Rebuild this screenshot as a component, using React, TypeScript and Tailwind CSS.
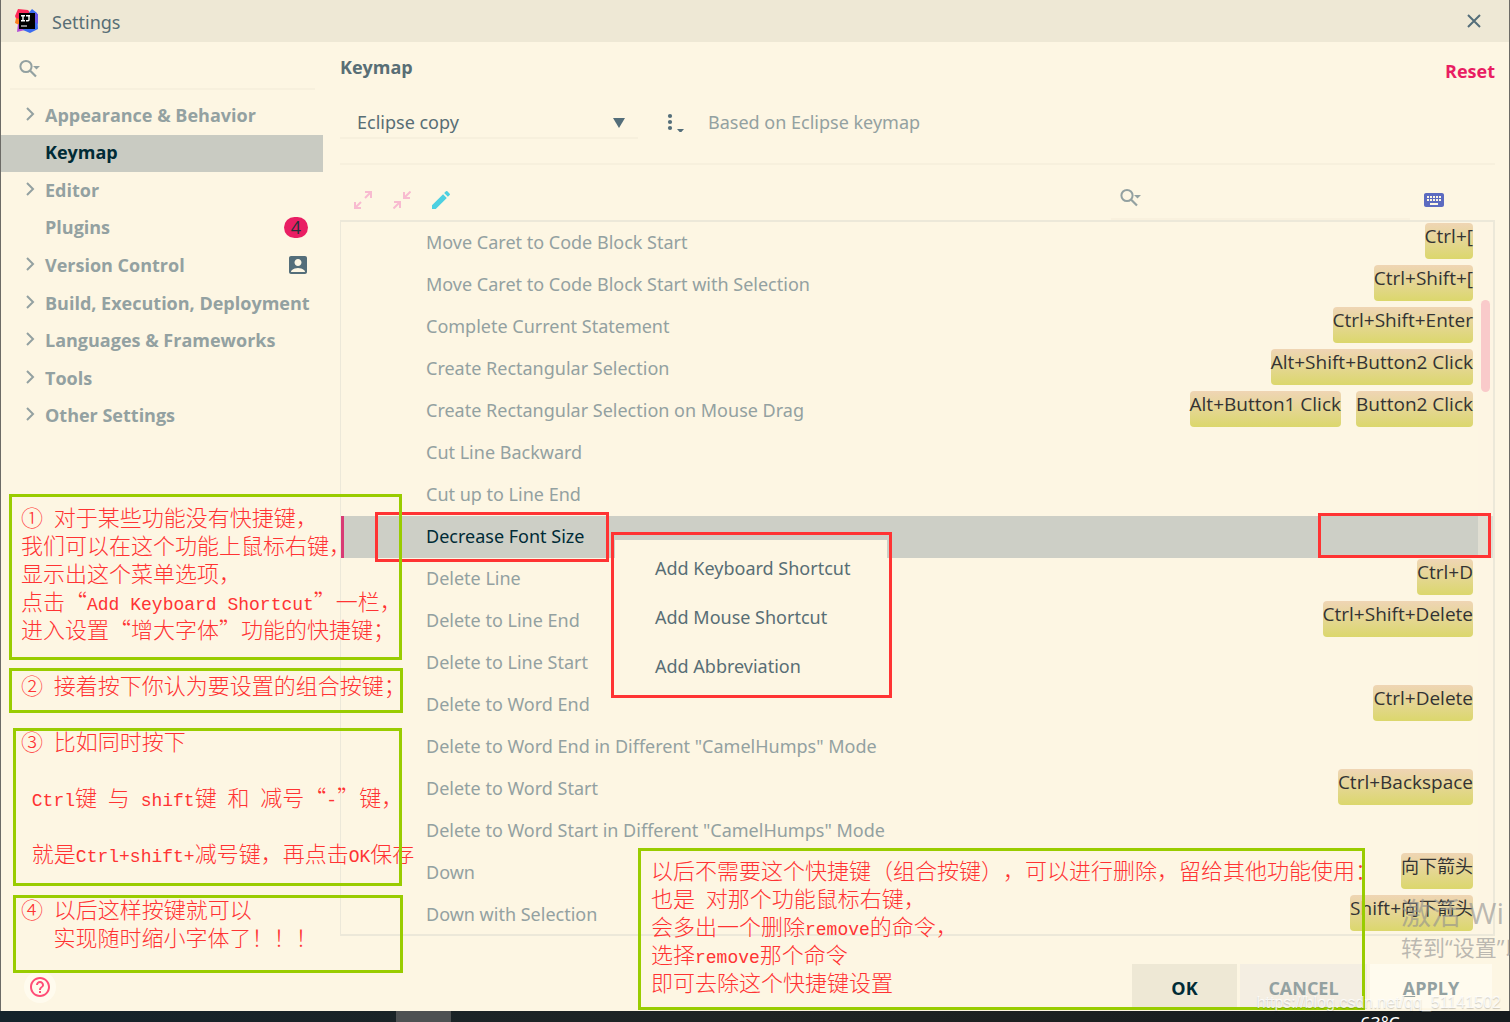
import React, { useState } from 'react';
import { MdAccountBox, MdEdit, MdHelpOutline, MdKeyboard } from 'react-icons/md';

interface Category {
  label: string;
  expandable: boolean;
  badge?: string;
  project?: boolean;
}

interface Action {
  name: string;
  shortcuts: string[];
}

const categories: Category[] = [
  { label: 'Appearance & Behavior', expandable: true },
  { label: 'Keymap', expandable: false },
  { label: 'Editor', expandable: true },
  { label: 'Plugins', expandable: false, badge: '4' },
  { label: 'Version Control', expandable: true, project: true },
  { label: 'Build, Execution, Deployment', expandable: true },
  { label: 'Languages & Frameworks', expandable: true },
  { label: 'Tools', expandable: true },
  { label: 'Other Settings', expandable: true },
];

const actions: Action[] = [
  { name: 'Move Caret to Code Block Start', shortcuts: ['Ctrl+['] },
  { name: 'Move Caret to Code Block Start with Selection', shortcuts: ['Ctrl+Shift+['] },
  { name: 'Complete Current Statement', shortcuts: ['Ctrl+Shift+Enter'] },
  { name: 'Create Rectangular Selection', shortcuts: ['Alt+Shift+Button2 Click'] },
  { name: 'Create Rectangular Selection on Mouse Drag', shortcuts: ['Alt+Button1 Click', 'Button2 Click'] },
  { name: 'Cut Line Backward', shortcuts: [] },
  { name: 'Cut up to Line End', shortcuts: [] },
  { name: 'Decrease Font Size', shortcuts: [] },
  { name: 'Delete Line', shortcuts: ['Ctrl+D'] },
  { name: 'Delete to Line End', shortcuts: ['Ctrl+Shift+Delete'] },
  { name: 'Delete to Line Start', shortcuts: [] },
  { name: 'Delete to Word End', shortcuts: ['Ctrl+Delete'] },
  { name: 'Delete to Word End in Different "CamelHumps" Mode', shortcuts: [] },
  { name: 'Delete to Word Start', shortcuts: ['Ctrl+Backspace'] },
  { name: 'Delete to Word Start in Different "CamelHumps" Mode', shortcuts: [] },
  { name: 'Down', shortcuts: ['向下箭头'] },
  { name: 'Down with Selection', shortcuts: ['Shift+向下箭头'] },
];

const menuItems = ['Add Keyboard Shortcut', 'Add Mouse Shortcut', 'Add Abbreviation'];

const Logo = () => (
  <svg className="w-6 h-6" viewBox="0 0 24 24" aria-hidden="true">
    <path d="M3 0 L13 1 L16 5 L11 15 L2 12 L0 7 Z" fill="#fe2857" />
    <path d="M1 9 L7 11 L6 17 L0 14 Z" fill="#fc801d" />
    <path d="M3 15 L12 16 L10 21 L2 23 Z" fill="#b24fd6" />
    <path d="M17 0 L22 4 L23 20 L15 24 L8 21 L12 6 Z" fill="#3b6cf0" />
    <path d="M20 4 L23 5 L23 15 L18 12 Z" fill="#6b57e8" />
    <rect x="4" y="4" width="16" height="16" fill="#000" />
    <path d="M6 6.700h4M8 6.700v5M6 11.700h4M11 6.700h4M14 6.700v4q0 1-1 1h-2" stroke="#fff" strokeWidth="1.400" fill="none" />
    <path d="M6 17h6" stroke="#ddd" strokeWidth="1.200" />
  </svg>
);

const SearchIcon = () => (
  <svg className="w-[22px] h-5 shrink-0" viewBox="0 0 22 20" aria-hidden="true">
    <circle cx="7" cy="7.500" r="5.600" fill="none" stroke="#93a1a1" strokeWidth="2" />
    <path d="M11 11.500 L17 17.500" stroke="#93a1a1" strokeWidth="2.200" />
    <path d="M14 7 h7 l-3.500 3.500 Z" fill="#93a1a1" />
  </svg>
);

const Chevron = () => (
  <svg className="w-[10px] h-[14px] mb-[2px]" viewBox="0 0 10 14" aria-hidden="true">
    <path d="M2 1 L8 7 L2 13" fill="none" stroke="#93a1a1" strokeWidth="2" />
  </svg>
);

const ExpandIcon = () => (
  <svg className="w-[18px] h-[18px]" viewBox="0 0 18 18" fill="none" stroke="#f8bbd0" strokeWidth="2" aria-hidden="true">
    <path d="M11 1h6v6M17 1l-6 6M7 17H1v-6M1 17l6-6" />
  </svg>
);

const CollapseIcon = () => (
  <svg className="w-[18px] h-[18px]" viewBox="0 0 18 18" fill="none" stroke="#f8bbd0" strokeWidth="2" aria-hidden="true">
    <path d="M17.500 .5l-6 6M11 1v6h6M.5 17.500l6-6M1 11h6v6" />
  </svg>
);

// Latin runs are set in a monospaced face that is half as wide as a Han character
const NoteLine: React.FC<{ text: string }> = ({ text }) => (
  <p className="h-7">
    {text.split(/([\x20-\x7e]+)/).map((part, i) =>
      i % 2 ? (
        <span key={i} className="font-['Liberation_Mono',monospace] text-lg/6">{part}</span>
      ) : (
        part
      )
    )}
  </p>
);

const Note: React.FC<{ className: string; lines: string[] }> = ({ className, lines }) => (
  <div
    lang="zh-CN"
    className={`absolute whitespace-pre font-light font-['Noto_Sans_CJK_SC',sans-serif] [text-spacing-trim:space-all] text-[22px]/6 text-[#ff3333] outline-3 -outline-offset-3 outline-[#99cc00] ${className}`}
  >
    {lines.map((line, i) => (
      <NoteLine key={i} text={line} />
    ))}
  </div>
);

const Sidebar = () => (
  <aside className="w-[322px] shrink-0 flex flex-col">
    <label className="flex items-center h-12 ml-[9px] mr-2 pt-2 pl-[9px] border-b-2 border-[#f7f0dd]">
      <SearchIcon />
      <input type="text" aria-label="Search settings" className="w-full bg-transparent outline-none" />
    </label>
    <nav className="mt-[7px] h-[338px] grid grid-cols-1 auto-rows-fr">
      {categories.map((item) => (
        <button
          key={item.label}
          className={`flex items-center pl-6 pr-[15px] pb-[2px] font-bold text-left font-['Open_Sans',sans-serif] ${
            item.label === 'Keymap' ? 'bg-[#c9cbc2] text-[#002b36]' : 'text-[#93a1a1]'
          }`}
        >
          <span className="w-5 shrink-0">{item.expandable && <Chevron />}</span>
          <span className="flex-1 min-w-0 whitespace-nowrap">{item.label}</span>
          {item.badge && (
            <span className="w-6 h-[21px] rounded-full bg-[#e91e63] text-[#263238] font-normal leading-5 text-center">
              {item.badge}
            </span>
          )}
          {item.project && <MdAccountBox className="w-6 h-6 -mr-[2px] text-[#546e7a]" />}
        </button>
      ))}
    </nav>
    <button aria-label="Help" className="mt-auto mb-2 ml-[23px] w-8 h-8 rounded-full bg-[#fffbee] flex items-center justify-center">
      <MdHelpOutline className="w-6 h-6 text-[#ff4d77]" />
    </button>
  </aside>
);

const ActionList: React.FC<{ selected: string; onSelect: (name: string) => void }> = ({ selected, onSelect }) => (
  <div className="relative h-[716px] border-2 border-l border-[#ece8d9] overflow-hidden">
    <ul>
      {actions.map((action) => (
        <li
          key={action.name}
          onClick={() => onSelect(action.name)}
          className={`h-[42px] flex justify-between pr-5 ${
            action.name === selected
              ? 'bg-[#cdcfc6] text-[#002b36] border-l-3 border-[#d93a74] pl-[82px]'
              : 'text-[#93a1a1] pl-[85px]'
          }`}
        >
          <span className="leading-10">{action.name}</span>
          <span className="flex gap-[15px] pt-px">
            {action.shortcuts.map((keys) => (
              <kbd
                key={keys}
                className="h-9 rounded-[4px] bg-gradient-to-b from-[#efd5b4] to-[#dbd76b] font-['Open_Sans','Noto_Sans_CJK_SC',sans-serif] text-[19px] leading-[26px] text-[#333]"
              >
                {keys.split(/([^\x20-\x7e]+)/).map((part, i) =>
                  i % 2 ? <span key={i} className="text-lg/6">{part}</span> : part
                )}
              </kbd>
            ))}
          </span>
        </li>
      ))}
    </ul>
    {/* Scroll track */}
    <div className="absolute right-0 inset-y-0 w-[15px] bg-[#fdf6e3]/40">
      <div className="ml-[3px] mt-[78px] w-[9px] h-[92px] rounded-full bg-[#f9caca]" />
    </div>
  </div>
);

const App: React.FC = () => {
  const [selected, setSelected] = useState('Decrease Font Size');

  return (
    <div className="relative min-h-screen flex flex-col overflow-hidden bg-[#fdf6e3] font-['Noto_Sans','Noto_Sans_CJK_SC',sans-serif] text-[18px]/6 text-[#586e75]">
      <div className="flex-1 flex flex-col border-x border-[#6c6b66]">
        <header className="h-[42px] px-[14px] flex items-center bg-[#eee8d5]">
          <Logo />
          <h1 className="ml-[13px] pt-px flex-1">Settings</h1>
          <button aria-label="Close" className="mr-[14px]">
            <svg className="w-[14px] h-[14px]" viewBox="0 0 14 14" aria-hidden="true">
              <path d="M1 1l12 12M13 1L1 13" stroke="#546e7a" strokeWidth="2" />
            </svg>
          </button>
        </header>

        <div className="flex-1 flex">
          <Sidebar />

          <main className="flex-1 ml-[17px] mr-[14px] flex flex-col">
            <div className="h-[63px] flex items-start justify-between font-bold font-['Open_Sans',sans-serif]">
              <h2 className="mt-[13px]">Keymap</h2>
              <button className="mt-[17px] text-[#e91e63]">Reset</button>
            </div>

            {/* Scheme selector */}
            <div className="flex items-center h-[34px]">
              <div className="relative w-[298px]">
                <select
                  aria-label="Keymap scheme"
                  className="w-full h-[34px] pt-[2px] pl-[17px] appearance-none bg-transparent border-b-2 border-[#f7f0dd] outline-none"
                >
                  <option>Eclipse copy</option>
                </select>
                <svg className="absolute right-[13px] top-[13px] w-3 h-[10px] pointer-events-none" viewBox="0 0 12 10">
                  <path d="M0 0h12L6 10Z" fill="#546e7a" />
                </svg>
              </div>
              <button aria-label="Scheme actions" className="ml-7">
                <svg className="w-5 h-5" viewBox="0 0 20 20" fill="#546e7a">
                  <circle cx="4" cy="4" r="2.100" />
                  <circle cx="4" cy="10" r="2.100" />
                  <circle cx="4" cy="16" r="2.100" />
                  <path d="M11 17h7l-3.500 4Z" />
                </svg>
              </button>
              <span className="ml-[22px] text-[#93a1a1]">Based on Eclipse keymap</span>
            </div>

            <hr className="mt-6 border-t-2 border-[#f7f0dd]" />

            {/* Toolbar */}
            <div className="h-[55px] pl-[14px] flex items-center">
              <button aria-label="Expand all" className="mt-[15px]">
                <ExpandIcon />
              </button>
              <button aria-label="Collapse all" className="mt-[15px] ml-[21px]">
                <CollapseIcon />
              </button>
              <button aria-label="Edit shortcut" className="mt-[15px] ml-[18px]">
                <MdEdit className="w-6 h-6 text-[#4dd0e1]" />
              </button>
              <label className="ml-auto mt-3 w-[299px] h-[43px] pl-[9px] flex items-center border-b-2 border-[#f9f1de]">
                <SearchIcon />
                <input type="text" aria-label="Search actions" className="w-full bg-transparent outline-none" />
              </label>
              <button aria-label="Find by shortcut" className="mt-[15px] ml-3 mr-[49px]">
                <MdKeyboard className="w-6 h-6 text-[#5c6bc0]" />
              </button>
            </div>

            <ActionList selected={selected} onSelect={setSelected} />

            <footer className="mt-7 mb-[3px] mr-[3px] flex justify-end font-bold font-['Open_Sans',sans-serif] text-[#93a1a1]">
              <button className="w-[105px] h-11 pt-1 bg-[#eee8d5] text-[#002b36]">OK</button>
              <button className="w-[127px] h-11 pt-1 ml-[3px] bg-[#f4eee2]">CANCEL</button>
              <button className="w-[122px] h-11 pt-1 ml-[3px] bg-[#fffbee]">
                <span className="underline">A</span>PPLY
              </button>
            </footer>
          </main>
        </div>
      </div>

      {/* Taskbar */}
      <div className="h-[11px] flex justify-end overflow-hidden bg-gradient-to-r from-[#14232b] via-[#1f2423] to-[#161b1e] text-white">
        <div className="w-[55px] ml-[396px] mr-auto bg-[#4e5152]" />
        <span className="mr-[110px]">63°C</span>
      </div>

      {/* Context menu */}
      <div className="absolute left-[611px] top-[532px] w-[281px] h-[166px] border-3 border-[#ff3333]">
        <div className="ml-px mr-[2px] mt-[5px] h-[154px] pt-[3px] flex flex-col bg-[#fdf6e3]">
          {menuItems.map((item) => (
            <button key={item} className="h-[49px] pl-10 text-left">{item}</button>
          ))}
        </div>
      </div>

      {/* Marked regions */}
      <div className="absolute left-[375px] top-[512px] w-[234px] h-[50px] border-3 border-[#ff3333]" />
      <div className="absolute right-[19px] top-[513px] w-[173px] h-[45px] border-3 border-[#ff3333]" />

      <Note
        className="left-[9px] top-[494px] w-[393px] h-[166px] pl-3 pt-[10px]"
        lines={[
          '① 对于某些功能没有快捷键，',
          '我们可以在这个功能上鼠标右键，',
          '显示出这个菜单选项，',
          '点击“Add Keyboard Shortcut”一栏，',
          '进入设置“增大字体”功能的快捷键；',
        ]}
      />
      <Note className="left-[9px] top-[668px] w-[394px] h-[45px] pl-3 pt-1" lines={['② 接着按下你认为要设置的组合按键；']} />
      <Note
        className="left-[13px] top-[728px] w-[389px] h-[158px] pl-2"
        lines={['③ 比如同时按下', '', ' Ctrl键 与 shift键 和 减号“-”键，', '', ' 就是Ctrl+shift+减号键，再点击OK保存']}
      />
      <Note
        className="left-[13px] top-[895px] w-[390px] h-[78px] pl-2 pt-px"
        lines={['④ 以后这样按键就可以', '   实现随时缩小字体了！！！']}
      />
      <Note
        className="left-[638px] top-[848px] w-[727px] h-[162px] pl-[13px] pt-[9px]"
        lines={[
          '以后不需要这个快捷键（组合按键），可以进行删除，留给其他功能使用：',
          '也是 对那个功能鼠标右键，',
          '会多出一个删除remove的命令，',
          '选择remove那个命令',
          '即可去除这个快捷键设置',
        ]}
      />

      {/* Watermarks */}
      <div className="absolute left-[1401px] top-[893px] w-[109px] overflow-hidden whitespace-nowrap font-['Open_Sans','Noto_Sans_CJK_SC',sans-serif] text-[#8f8f8f]/60">
        <p className="text-[30px]/10">激活 Wi</p>
        <p className="text-[22px]/7">转到“设置”以</p>
      </div>
      <p className="absolute right-[9px] top-[991px] font-['Liberation_Sans',sans-serif] text-base/6 text-white/80 text-shadow-xs">
        https://blog.csdn.net/qq_51141502
      </p>
    </div>
  );
};

export default App;
